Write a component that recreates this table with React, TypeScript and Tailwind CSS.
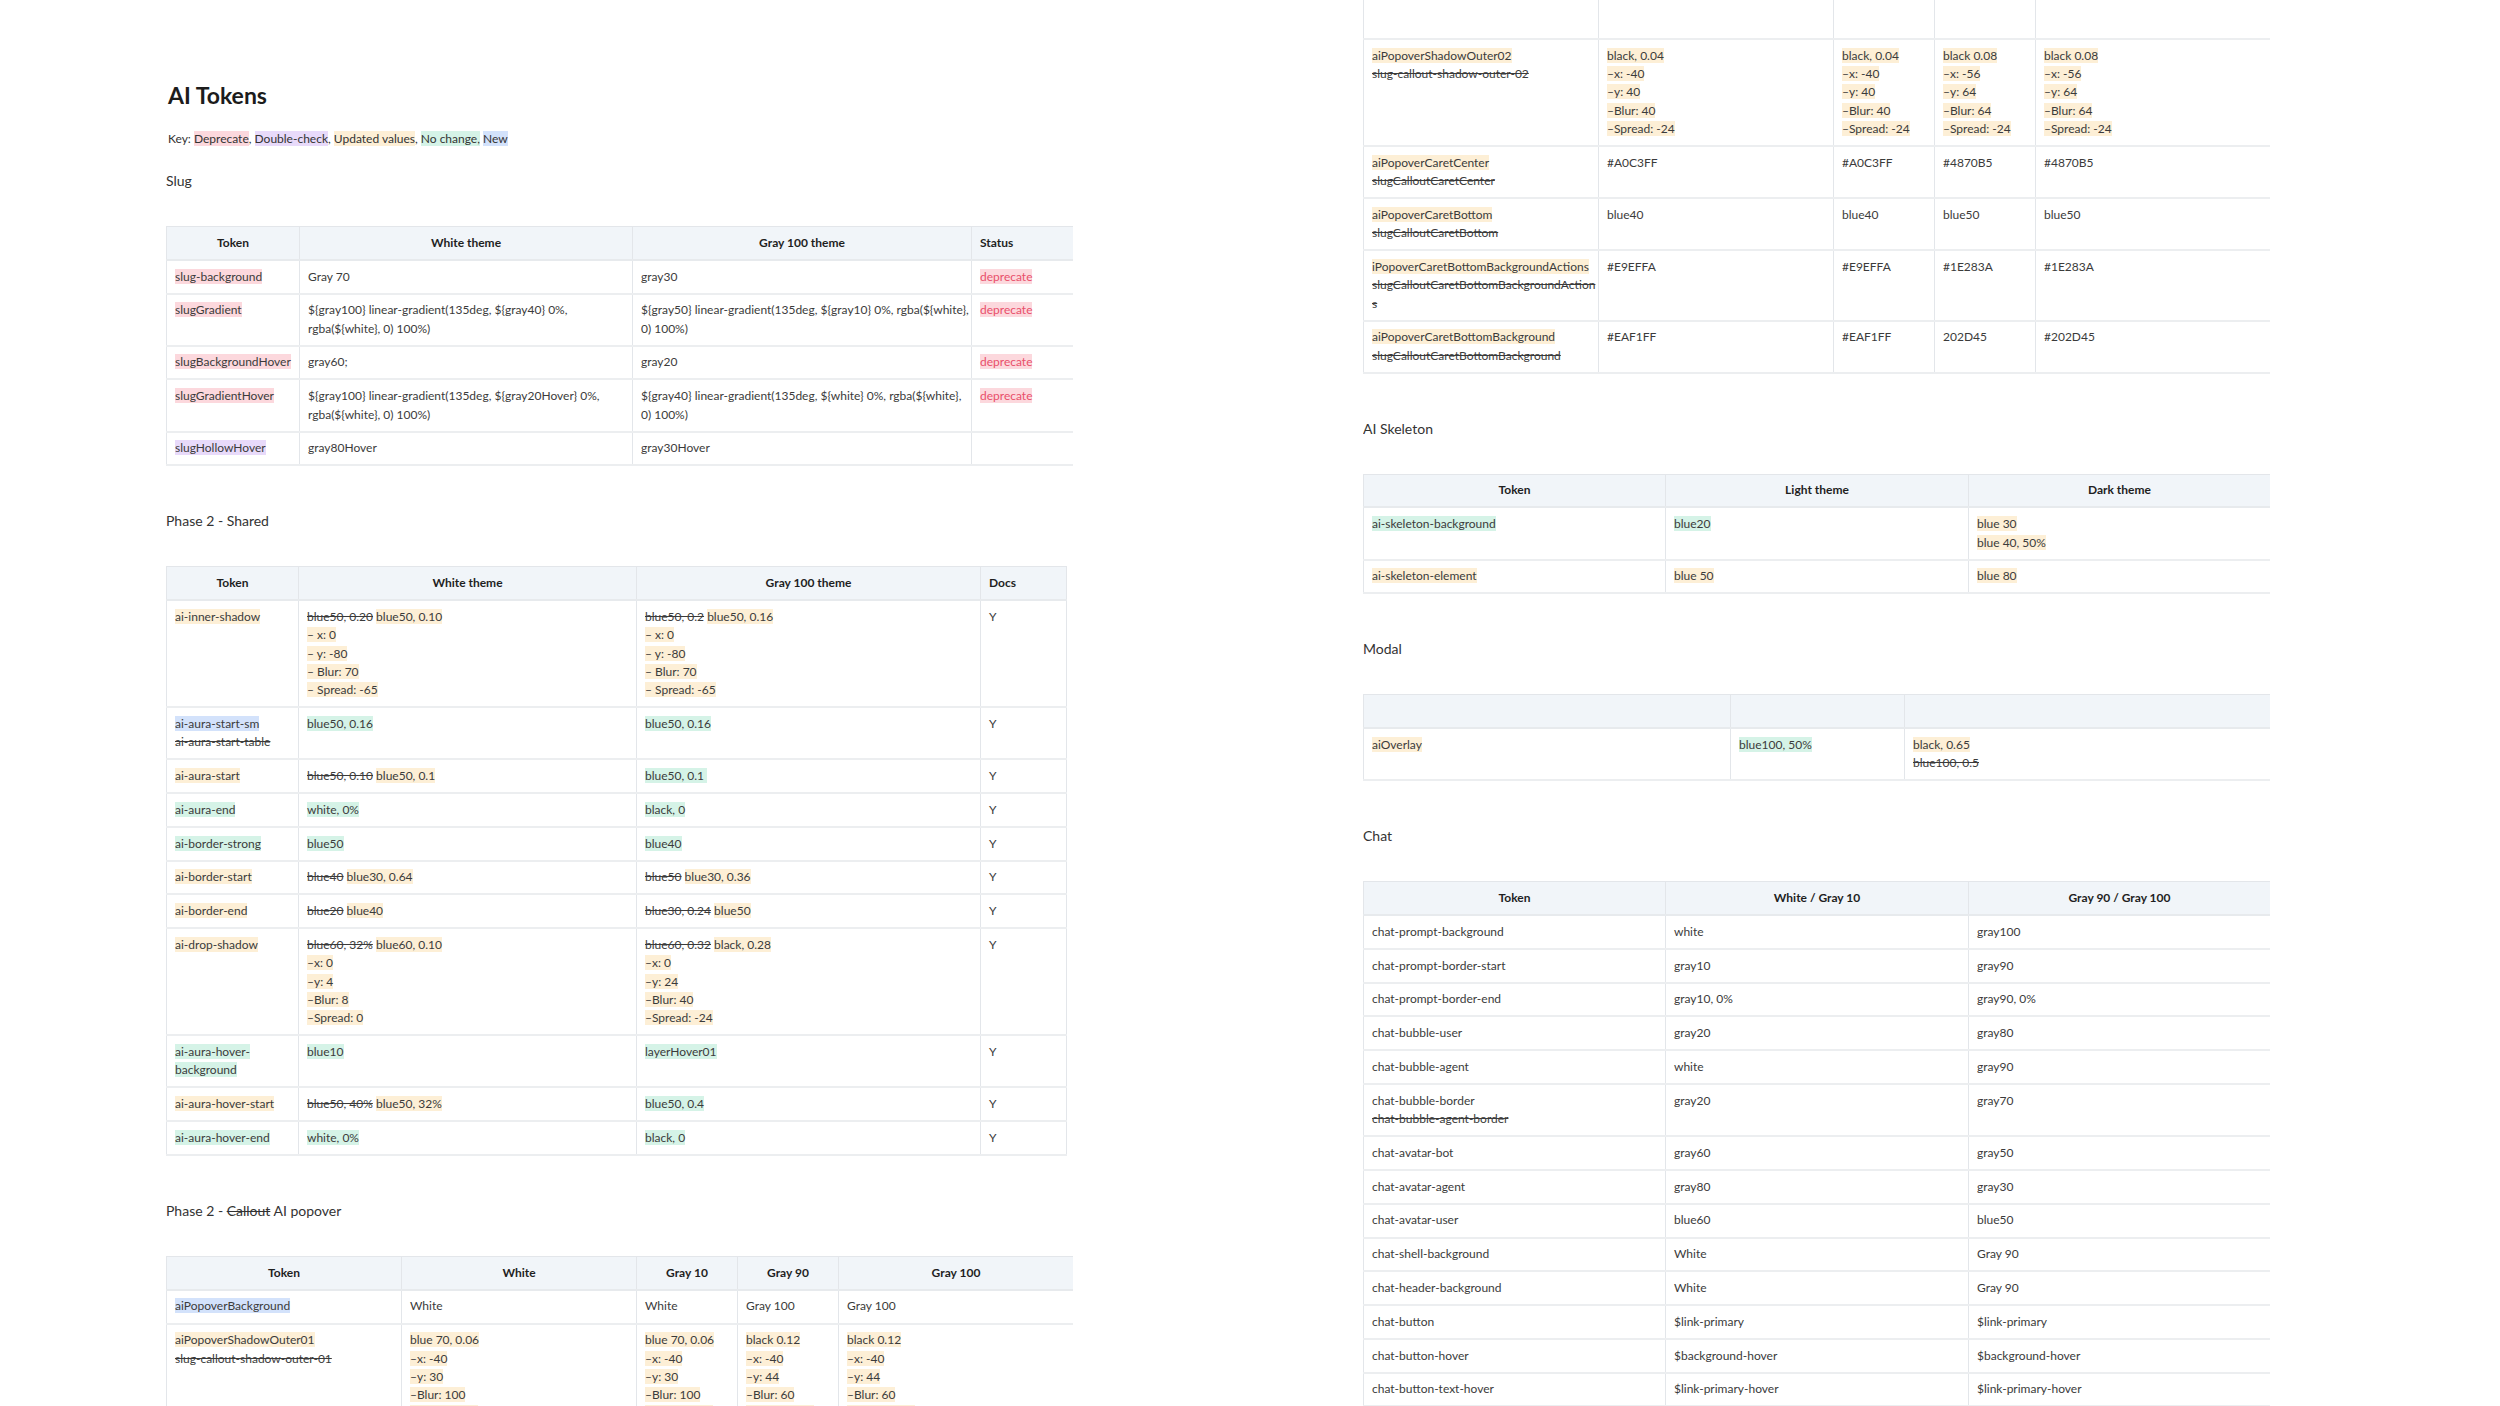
import React from "react";

const pink = "bg-[#fcd8dd]";
const purple = "bg-[#e8dafa]";
const cream = "bg-[#fdefd6]";
const mint = "bg-[#d5f3e7]";
const blue = "bg-[#d3e2fb]";

type Node = React.ReactNode;

function Hl({ bg, children }: { bg: string; children: Node }) {
  return <span className={bg}>{children}</span>;
}

function Old({ children }: { children: Node }) {
  return <span className="line-through">{children}</span>;
}

// one highlighted span per line, like the doc editor does it
function Lines({ bg, items }: { bg?: string; items: Node[] }) {
  return (
    <>
      {items.map((t, i) => (
        <div key={i} className="whitespace-nowrap">
          {bg ? <Hl bg={bg}>{t}</Hl> : t}
        </div>
      ))}
    </>
  );
}

const dep = <span className="bg-[#fcd8dd] text-[#e94f6b]">deprecate</span>;

type Col = { w: string; head?: Node; left?: boolean };

function Grid({
  cols,
  rows,
  cut = false,
  width = "w-[907px]",
}: {
  cols: Col[];
  rows: Node[][];
  cut?: boolean;
  width?: string;
}) {
  return (
    <table
      className={`${width} table-fixed border-collapse border-x border-b border-[#e3e6ea] text-[12px] leading-[18.3px] text-[#3b3b3b] ${
        cut ? "" : "border-t"
      }`}
    >
      <colgroup>
        {cols.map((c, i) => (
          <col key={i} className={c.w} />
        ))}
      </colgroup>
      {!cut && (
        <thead>
          <tr className="bg-[#f1f5f9]">
            {cols.map((c, i) => (
              <th
                key={i}
                className={`border-x border-[#e3e6ea] border-b-2 border-b-[#e7eaed] px-2 py-[6.75px] font-bold text-[#1f1f1f] ${
                  c.left ? "text-left" : "text-center"
                }`}
              >
                {c.head ?? "\u00a0"}
              </th>
            ))}
          </tr>
        </thead>
      )}
      <tbody>
        {cut && (
          <tr>
            {cols.map((_, i) => (
              <td key={i} className="h-[39px] border-x border-[#e3e6ea] border-b-2 border-b-[#eceef0] p-0" />
            ))}
          </tr>
        )}
        {rows.map((r, i) => (
          <tr key={i}>
            {r.map((cell, j) => (
              <td
                key={j}
                className="overflow-hidden border-x border-[#e3e6ea] border-b-2 border-b-[#eceef0] px-2 py-[6.75px] align-top"
              >
                {cell}
              </td>
            ))}
          </tr>
        ))}
      </tbody>
    </table>
  );
}

function Heading({ children, first = false }: { children: Node; first?: boolean }) {
  return (
    <h2 className={`${first ? "mt-[23px]" : "mt-[45px]"} mb-[35px] text-[14px] leading-[20px] text-[#333]`}>
      {children}
    </h2>
  );
}

const slugCols: Col[] = [
  { w: "w-[133px]", head: "Token" },
  { w: "w-[333px]", head: "White theme" },
  { w: "w-[339px]", head: "Gray 100 theme" },
  { w: "w-[102px]", head: "Status", left: true },
];

const slugRows: Node[][] = [
  [<Hl bg={pink}>slug-background</Hl>, "Gray 70", "gray30", dep],
  [
    <Hl bg={pink}>slugGradient</Hl>,
    <Lines items={["${gray100} linear-gradient(135deg, ${gray40} 0%,", "rgba(${white}, 0) 100%)"]} />,
    <Lines items={["${gray50} linear-gradient(135deg, ${gray10} 0%, rgba(${white},", "0) 100%)"]} />,
    dep,
  ],
  [<Hl bg={pink}>slugBackgroundHover</Hl>, "gray60;", "gray20", dep],
  [
    <Hl bg={pink}>slugGradientHover</Hl>,
    <Lines items={["${gray100} linear-gradient(135deg, ${gray20Hover} 0%,", "rgba(${white}, 0) 100%)"]} />,
    <Lines items={["${gray40} linear-gradient(135deg, ${white} 0%, rgba(${white},", "0) 100%)"]} />,
    dep,
  ],
  [<Hl bg={purple}>slugHollowHover</Hl>, "gray80Hover", "gray30Hover", ""],
];

const sharedCols: Col[] = [
  { w: "w-[132px]", head: "Token" },
  { w: "w-[338px]", head: "White theme" },
  { w: "w-[344px]", head: "Gray 100 theme" },
  { w: "w-[86px]", head: "Docs", left: true },
];

const sharedRows: Node[][] = [
  [
    <Hl bg={cream}>ai-inner-shadow</Hl>,
    <>
      <div>
        <Old>blue50, 0.20</Old> <Hl bg={cream}>blue50, 0.10</Hl>
      </div>
      <Lines bg={cream} items={["– x: 0", "– y: -80", "– Blur: 70", "– Spread: -65"]} />
    </>,
    <>
      <div>
        <Old>blue50, 0.2</Old> <Hl bg={cream}>blue50, 0.16</Hl>
      </div>
      <Lines bg={cream} items={["– x: 0", "– y: -80", "– Blur: 70", "– Spread: -65"]} />
    </>,
    "Y",
  ],
  [
    <>
      <div>
        <Hl bg={blue}>ai-aura-start-sm</Hl>
      </div>
      <div className="whitespace-nowrap">
        <Old>ai-aura-start-table</Old>
      </div>
    </>,
    <Hl bg={mint}>blue50, 0.16</Hl>,
    <Hl bg={mint}>blue50, 0.16</Hl>,
    "Y",
  ],
  [
    <Hl bg={cream}>ai-aura-start</Hl>,
    <>
      <Old>blue50, 0.10</Old> <Hl bg={cream}>blue50, 0.1</Hl>
    </>,
    <Hl bg={mint}>blue50, 0.1&nbsp;</Hl>,
    "Y",
  ],
  [<Hl bg={mint}>ai-aura-end</Hl>, <Hl bg={mint}>white, 0%</Hl>, <Hl bg={mint}>black, 0</Hl>, "Y"],
  [<Hl bg={mint}>ai-border-strong</Hl>, <Hl bg={mint}>blue50</Hl>, <Hl bg={mint}>blue40</Hl>, "Y"],
  [
    <Hl bg={cream}>ai-border-start</Hl>,
    <>
      <Old>blue40</Old> <Hl bg={cream}>blue30, 0.64</Hl>
    </>,
    <>
      <Old>blue50</Old> <Hl bg={cream}>blue30, 0.36</Hl>
    </>,
    "Y",
  ],
  [
    <Hl bg={cream}>ai-border-end</Hl>,
    <>
      <Old>blue20</Old> <Hl bg={cream}>blue40</Hl>
    </>,
    <>
      <Old>blue30, 0.24</Old> <Hl bg={cream}>blue50</Hl>
    </>,
    "Y",
  ],
  [
    <Hl bg={cream}>ai-drop-shadow</Hl>,
    <>
      <div>
        <Old>blue60, 32%</Old> <Hl bg={cream}>blue60, 0.10</Hl>
      </div>
      <Lines bg={cream} items={["–x: 0", "–y: 4", "–Blur: 8", "–Spread: 0"]} />
    </>,
    <>
      <div>
        <Old>blue60, 0.32</Old> <Hl bg={cream}>black, 0.28</Hl>
      </div>
      <Lines bg={cream} items={["–x: 0", "–y: 24", "–Blur: 40", "–Spread: -24"]} />
    </>,
    "Y",
  ],
  [
    <Lines bg={mint} items={["ai-aura-hover-", "background"]} />,
    <Hl bg={mint}>blue10</Hl>,
    <Hl bg={mint}>layerHover01</Hl>,
    "Y",
  ],
  [
    <Hl bg={cream}>ai-aura-hover-start</Hl>,
    <>
      <Old>blue50, 40%</Old> <Hl bg={cream}>blue50, 32%</Hl>
    </>,
    <Hl bg={mint}>blue50, 0.4</Hl>,
    "Y",
  ],
  [<Hl bg={mint}>ai-aura-hover-end</Hl>, <Hl bg={mint}>white, 0%</Hl>, <Hl bg={mint}>black, 0</Hl>, "Y"],
];

const popCols: Col[] = [
  { w: "w-[235px]", head: "Token" },
  { w: "w-[235px]", head: "White" },
  { w: "w-[101px]", head: "Gray 10" },
  { w: "w-[101px]", head: "Gray 90" },
  { w: "w-[235px]", head: "Gray 100" },
];

function TokenPair({ name, old }: { name: Node; old: Node }) {
  return (
    <>
      <div className="whitespace-nowrap">
        <Hl bg={cream}>{name}</Hl>
      </div>
      <div className="whitespace-nowrap">
        <Old>{old}</Old>
      </div>
    </>
  );
}

const popRows: Node[][] = [
  [<Hl bg={blue}>aiPopoverBackground</Hl>, "White", "White", "Gray 100", "Gray 100"],
  [
    <TokenPair name="aiPopoverShadowOuter01" old="slug-callout-shadow-outer-01" />,
    <Lines bg={cream} items={["blue 70, 0.06", "–x: -40", "–y: 30", "–Blur: 100", "–Spread: -24"]} />,
    <Lines bg={cream} items={["blue 70, 0.06", "–x: -40", "–y: 30", "–Blur: 100", "–Spread: -24"]} />,
    <Lines bg={cream} items={["black 0.12", "–x: -40", "–y: 44", "–Blur: 60", "–Spread: -24"]} />,
    <Lines bg={cream} items={["black 0.12", "–x: -40", "–y: 44", "–Blur: 60", "–Spread: -24"]} />,
  ],
];

const popRestRows: Node[][] = [
  [
    <TokenPair name="aiPopoverShadowOuter02" old="slug-callout-shadow-outer-02" />,
    <Lines bg={cream} items={["black, 0.04", "–x: -40", "–y: 40", "–Blur: 40", "–Spread: -24"]} />,
    <Lines bg={cream} items={["black, 0.04", "–x: -40", "–y: 40", "–Blur: 40", "–Spread: -24"]} />,
    <Lines bg={cream} items={["black 0.08", "–x: -56", "–y: 64", "–Blur: 64", "–Spread: -24"]} />,
    <Lines bg={cream} items={["black 0.08", "–x: -56", "–y: 64", "–Blur: 64", "–Spread: -24"]} />,
  ],
  [
    <TokenPair name="aiPopoverCaretCenter" old="slugCalloutCaretCenter" />,
    "#A0C3FF",
    "#A0C3FF",
    "#4870B5",
    "#4870B5",
  ],
  [<TokenPair name="aiPopoverCaretBottom" old="slugCalloutCaretBottom" />, "blue40", "blue40", "blue50", "blue50"],
  [
    <>
      <div className="whitespace-nowrap">
        <Hl bg={cream}>iPopoverCaretBottomBackgroundActions</Hl>
      </div>
      <div className="whitespace-nowrap">
        <Old>slugCalloutCaretBottomBackgroundAction</Old>
      </div>
      <div>
        <Old>s</Old>
      </div>
    </>,
    "#E9EFFA",
    "#E9EFFA",
    "#1E283A",
    "#1E283A",
  ],
  [
    <TokenPair name="aiPopoverCaretBottomBackground" old="slugCalloutCaretBottomBackground" />,
    "#EAF1FF",
    "#EAF1FF",
    "202D45",
    "#202D45",
  ],
];

const thirds = ["w-[302px]", "w-[303px]", "w-[302px]"];

const skeletonCols: Col[] = [
  { w: thirds[0], head: "Token" },
  { w: thirds[1], head: "Light theme" },
  { w: thirds[2], head: "Dark theme" },
];

const skeletonRows: Node[][] = [
  [
    <Hl bg={mint}>ai-skeleton-background</Hl>,
    <Hl bg={mint}>blue20</Hl>,
    <Lines bg={cream} items={["blue 30", "blue 40, 50%"]} />,
  ],
  [<Hl bg={cream}>ai-skeleton-element</Hl>, <Hl bg={cream}>blue 50</Hl>, <Hl bg={cream}>blue 80</Hl>],
];

const modalCols: Col[] = [{ w: "w-[367px]" }, { w: "w-[174px]" }, { w: "w-[366px]" }];

const modalRows: Node[][] = [
  [
    <Hl bg={cream}>aiOverlay</Hl>,
    <Hl bg={mint}>blue100, 50%</Hl>,
    <>
      <div>
        <Hl bg={cream}>black, 0.65</Hl>
      </div>
      <div>
        <Old>blue100, 0.5</Old>
      </div>
    </>,
  ],
];

const chatCols: Col[] = [
  { w: thirds[0], head: "Token" },
  { w: thirds[1], head: "White / Gray 10" },
  { w: thirds[2], head: "Gray 90 / Gray 100" },
];

const chatRows: Node[][] = [
  ["chat-prompt-background", "white", "gray100"],
  ["chat-prompt-border-start", "gray10", "gray90"],
  ["chat-prompt-border-end", "gray10, 0%", "gray90, 0%"],
  ["chat-bubble-user", "gray20", "gray80"],
  ["chat-bubble-agent", "white", "gray90"],
  [
    <>
      <div>chat-bubble-border</div>
      <div>
        <Old>chat-bubble-agent-border</Old>
      </div>
    </>,
    "gray20",
    "gray70",
  ],
  ["chat-avatar-bot", "gray60", "gray50"],
  ["chat-avatar-agent", "gray80", "gray30"],
  ["chat-avatar-user", "blue60", "blue50"],
  ["chat-shell-background", "White", "Gray 90"],
  ["chat-header-background", "White", "Gray 90"],
  ["chat-button", "$link-primary", "$link-primary"],
  ["chat-button-hover", "$background-hover", "$background-hover"],
  ["chat-button-text-hover", "$link-primary-hover", "$link-primary-hover"],
];

export default function App() {
  return (
    <div className="flex h-[1406px] w-[2500px] gap-[290px] overflow-hidden bg-white pl-[166px] font-['Lato','Noto_Sans',sans-serif] text-[#3b3b3b]">
      <div className="h-[1406px] w-[907px] shrink-0 overflow-hidden pt-[81px]">
        <h1 className="pl-[2px] text-[23px] leading-[28px] font-bold text-[#1c1c1c]">AI Tokens</h1>
        <p className="mt-[21px] pl-[2px] text-[12px] leading-[18px] text-[#333]">
          Key: <Hl bg={pink}>Deprecate</Hl>, <Hl bg={purple}>Double-check</Hl>, <Hl bg={cream}>Updated values</Hl>
          , <Hl bg={mint}>No change,</Hl> <Hl bg={blue}>New</Hl>
        </p>
        <Heading first>Slug</Heading>
        <Grid cols={slugCols} rows={slugRows} />
        <Heading>Phase 2 - Shared</Heading>
        <Grid cols={sharedCols} rows={sharedRows} width="w-[900px]" />
        <Heading>
          Phase 2 - <Old>Callout</Old> AI popover
        </Heading>
        <Grid cols={popCols} rows={popRows} />
      </div>

      <div className="h-[1406px] w-[907px] shrink-0 overflow-hidden">
        <Grid cols={popCols} rows={popRestRows} cut />
        <Heading>AI Skeleton</Heading>
        <Grid cols={skeletonCols} rows={skeletonRows} />
        <Heading>Modal</Heading>
        <Grid cols={modalCols} rows={modalRows} />
        <Heading>Chat</Heading>
        <Grid cols={chatCols} rows={chatRows} />
      </div>
    </div>
  );
}
